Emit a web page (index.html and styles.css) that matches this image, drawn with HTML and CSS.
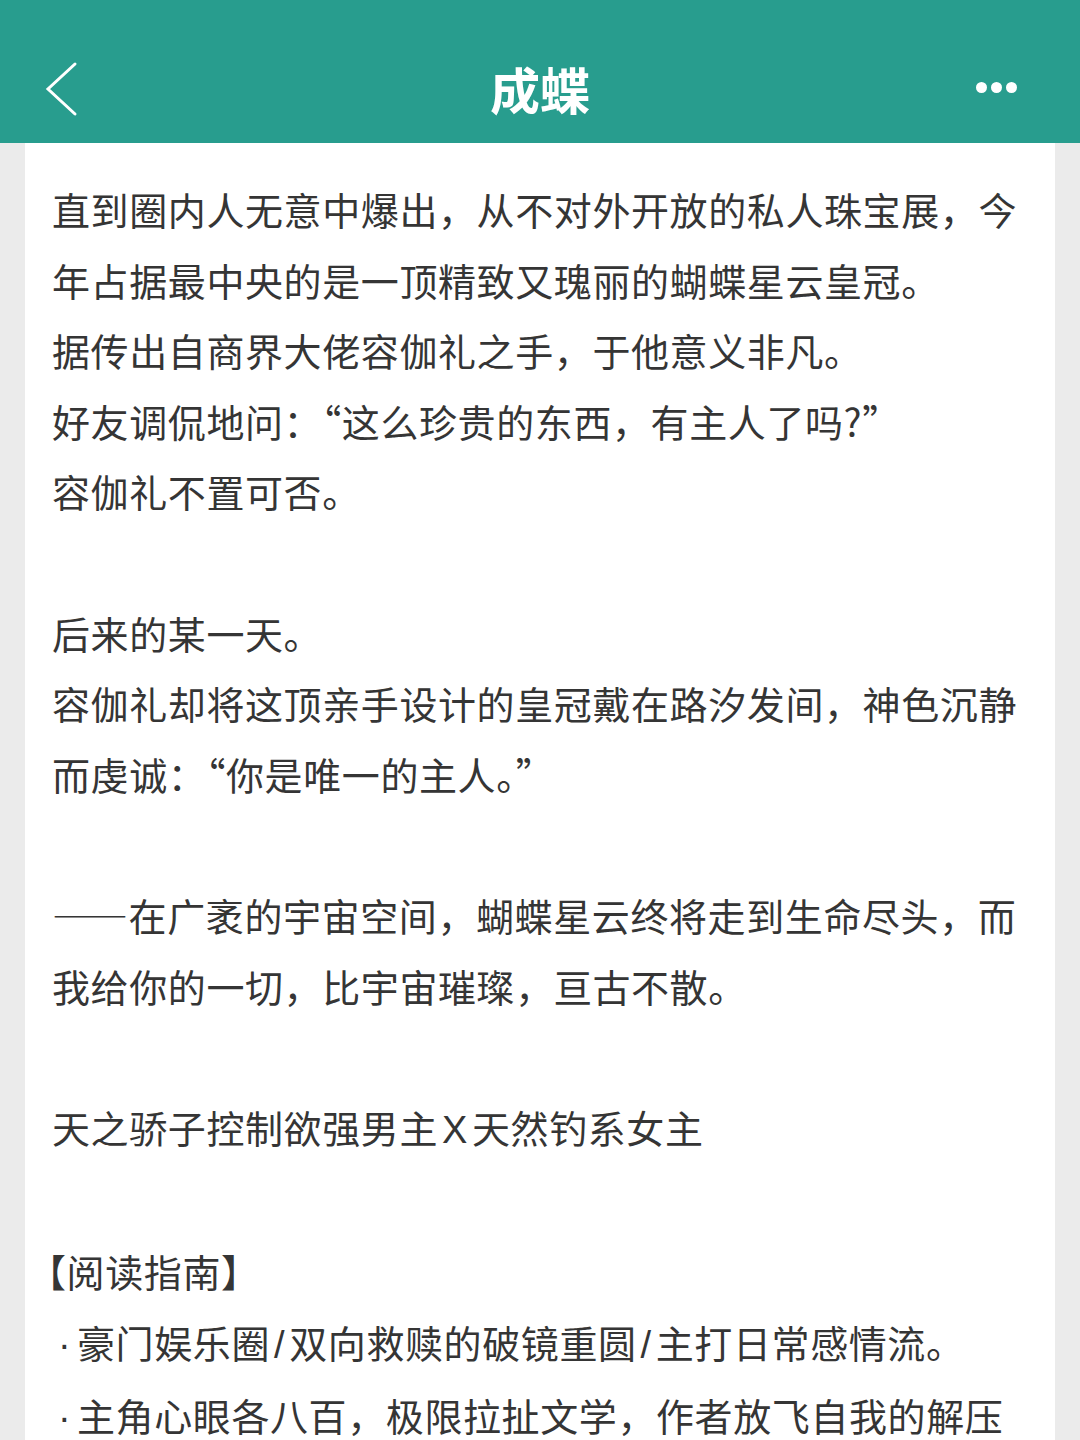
FILE: index.html
```html
<!DOCTYPE html>
<html lang="zh-CN">
<head>
    <meta charset="UTF-8">
    <meta name="viewport" content="width=device-width, initial-scale=1.0">
    <title>成蝶</title>
    <link rel="stylesheet" href="styles.css">
</head>
<body>
    <header class="topbar">
        <a class="topbar-back" href="#">
            <svg width="40" height="60" viewBox="0 0 40 60">
                <polyline points="30,5 3,30 30,55" fill="none" stroke="#fff" stroke-width="3" stroke-linecap="round" stroke-linejoin="miter"/>
            </svg>
        </a>
        <h1 class="topbar-title">成蝶</h1>
        <span class="topbar-more">
            <i></i><i></i><i></i>
        </span>
    </header>
    <main class="sheet">
        <p>直到圈内人无意中爆出，从不对外开放的私人珠宝展，今<br>年占据最中央的是一顶精致又瑰丽的蝴蝶星云皇冠。<br>据传出自商界大佬容伽礼之手，于他意义非凡。<br>好友调侃地问：“这么珍贵的东西，有主人了吗?”<br>容伽礼不置可否。</p>
        <p>后来的某一天。<br>容伽礼却将这顶亲手设计的皇冠戴在路汐发间，神色沉静<br>而虔诚：“你是唯一的主人。”</p>
        <p>——在广袤的宇宙空间，蝴蝶星云终将走到生命尽头，而<br>我给你的一切，比宇宙璀璨，亘古不散。</p>
        <p>天之骄子控制欲强男主<span class="latin">X</span>天然钓系女主</p>
        <p class="guide-title">【阅读指南】</p>
        <p><span class="dot">·</span>豪门娱乐圈<span class="latin">/</span>双向救赎的破镜重圆<span class="latin">/</span>主打日常感情流。<br><span class="dot">·</span>主角心眼各八百，极限拉扯文学，作者放飞自我的解压</p>
    </main>
</body>
</html>
```

FILE: styles.css
```css
html, body {
    margin: 0;
    height: 100%;
    background-color: #ebebeb;
    font-family: "Noto Sans CJK SC", "Noto Sans", sans-serif;
}
.topbar {
    height: 143px;
    background-color: #289d8e;
    display: grid;
    grid-template-columns: 1fr auto 1fr;
    align-items: center;
    padding: 32px 63px 0 45px;
    box-sizing: border-box;
}
.topbar-back {
    display: flex;
    width: 60px;
    padding-top: 2px;
}
.topbar-title {
    margin: 0;
    color: #fff;
    font-size: 50px;
    font-weight: bold;
    line-height: 1;
    transform: translateX(9px);
}
.topbar-more {
    display: flex;
    gap: 4px;
    justify-content: flex-end;
}
.topbar-more i {
    width: 11px;
    height: 11px;
    border-radius: 50%;
    background: #fff;
}
.sheet {
    margin: 0 25px;
    background: #fff;
    min-height: calc(100% - 143px);
    padding: 31px 12px 0 27px;
    box-sizing: border-box;
    color: #353535;
    font-size: 38px;
    line-height: 70.6px;
    letter-spacing: 0.6px;
}
.sheet p {
    margin: 0 0 70.6px;
    white-space: nowrap;
}
.sheet p.guide-title {
    margin: 0 0 0 -24px;
}
.latin {
    font-family: "Liberation Sans", sans-serif;
    margin: 0 4px;
}
.dot {
    display: inline-block;
    width: 25px;
    padding-left: 6px;
    box-sizing: border-box;
    font-family: "Liberation Sans", sans-serif;
}
```
